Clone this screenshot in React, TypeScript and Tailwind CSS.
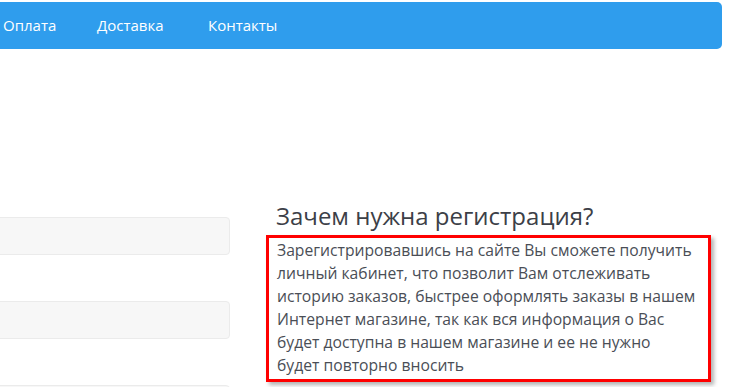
import React from "react";

const navItems = [
  { label: "Оплата", width: "w-[94px]" },
  { label: "Доставка", width: "w-[111px]" },
  { label: "Контакты", width: "w-[120px]" },
];

const lines = [
  "Зарегистрировавшись на сайте Вы сможете получить",
  "личный кабинет, что позволит Вам отслеживать",
  "историю заказов, быстрее оформлять заказы в нашем",
  "Интернет магазине, так как вся информация о Вас",
  "будет доступна в нашем магазине и ее не нужно",
  "будет повторно вносить",
];

const App = () => {
  return (
    <div className="w-[740px] h-[387px] overflow-hidden bg-white font-['Open_Sans','Liberation_Sans',sans-serif]">
      {/* Top menu */}
      <nav className="mt-[2px] h-[47px] w-[722px] bg-[#2f9ded] rounded-r-[5px] flex items-center pl-[3px]">
        {navItems.map((item) => (
          <a
            key={item.label}
            href="#"
            className={`${item.width} text-white text-[15px] leading-none`}
          >
            {item.label}
          </a>
        ))}
      </nav>

      <div className="flex mt-[168px]">
        {/* Registration form, cut off on the left */}
        <div className="-ml-[30px] w-[260px] shrink-0 flex flex-col gap-[46px]">
          <div className="h-[38px] rounded-[4px] border border-[#ebebeb] bg-[#f7f7f7]" />
          <div className="h-[38px] rounded-[4px] border border-[#ebebeb] bg-[#f7f7f7]" />
          <div className="h-[38px] rounded-[4px] border border-[#ebebeb] bg-[#f7f7f7]" />
        </div>

        {/* Why register */}
        <div className="ml-[36px] w-[445px] shrink-0 -mt-[16px]">
          <h2 className="pl-[10px] text-[24px] leading-[30px] text-[#3c4047] font-normal whitespace-nowrap">
            Зачем нужна регистрация?
          </h2>
          <div className="mt-[4px] border-[3px] border-[#ff0000] pl-[8px] pr-[4px] pt-[1px] pb-[2px] shadow-[3px_3px_4px_rgba(0,0,0,0.3)]">
            <p className="text-[15.7px] leading-[23px] text-[#4a4e56]">
              {lines.map((line) => (
                <span key={line} className="block whitespace-nowrap">
                  {line}
                </span>
              ))}
            </p>
          </div>
        </div>
      </div>
    </div>
  );
};

export default App;
